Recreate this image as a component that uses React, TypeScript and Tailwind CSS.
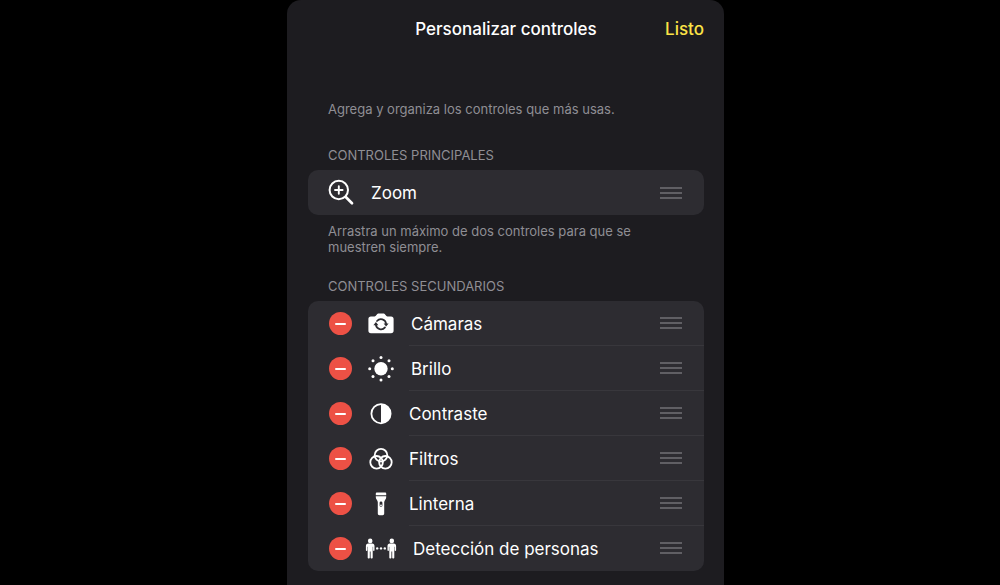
import { useState } from 'react';
import type { ReactNode } from 'react';

type IconSize = 'sm' | 'md' | 'lg';

interface Control {
  id: string;
  label: string;
  size: IconSize;
  icon: ReactNode;
}

// Wider glyphs push their label a little further to the right
const LABEL_PAD: Record<IconSize, string> = {
  sm: 'pl-0',
  md: 'pl-0.5',
  lg: 'pl-1',
};

function ZoomIcon() {
  return (
    <svg width="28" height="28" viewBox="0 0 28 28" fill="none" stroke="white" strokeLinecap="round" aria-hidden="true">
      <circle cx="10.8" cy="11" r="9.2" strokeWidth="2" />
      <path d="M17.8 18 L24 24.2" strokeWidth="2.7" />
      <path d="M10.8 7.2 V14.8 M7 11 H14.6" strokeWidth="1.9" />
    </svg>
  );
}

function CameraIcon() {
  return (
    <svg width="26" height="22" viewBox="0 0 26 22" aria-hidden="true">
      <path
        d="M3 3.4 H6.6 C7.4 3.4 7.7 3 8.2 2.3 L8.9 1.4 C9.4 .7 9.9 .5 10.8 .5 H15.2 C16.1 .5 16.6 .7 17.1 1.4 L17.8 2.3 C18.3 3 18.6 3.4 19.4 3.4 H23 C24.8 3.4 25.6 4.3 25.6 6 V17.6 C25.6 19.4 24.8 20.2 23 20.2 H3 C1.2 20.2 .4 19.4 .4 17.6 V6 C.4 4.3 1.2 3.4 3 3.4 Z"
        fill="white"
      />
      <g fill="none" stroke="#2d2c31" strokeWidth="1.7" strokeLinecap="round">
        <path d="M9 8 A5.2 5.2 0 0 1 18.1 10.6" />
        <path d="M17 14.4 A5.2 5.2 0 0 1 7.9 12" />
      </g>
      <path d="M15.6 10.4 H20.6 L18.1 13.5 Z M5.4 12.2 H10.4 L7.9 9.1 Z" fill="#2d2c31" />
    </svg>
  );
}

function BrightnessIcon() {
  return (
    <svg width="26" height="26" viewBox="0 0 26 26" fill="white" aria-hidden="true">
      <circle cx="13" cy="12.7" r="6.7" />
      <circle cx="13" cy="1.6" r="1.5" />
      <circle cx="21" cy="4.8" r="1.5" />
      <circle cx="24.3" cy="12.7" r="1.5" />
      <circle cx="21" cy="20.6" r="1.5" />
      <circle cx="13" cy="23.9" r="1.5" />
      <circle cx="5" cy="20.6" r="1.5" />
      <circle cx="1.7" cy="12.7" r="1.5" />
      <circle cx="5" cy="4.8" r="1.5" />
    </svg>
  );
}

function ContrastIcon() {
  return (
    <svg width="22" height="22" viewBox="0 0 22 22" aria-hidden="true">
      <circle cx="11" cy="10.7" r="9.6" fill="none" stroke="white" strokeWidth="1.8" />
      <path d="M11 1.1 A9.6 9.6 0 0 1 11 20.3 Z" fill="white" />
    </svg>
  );
}

function FiltersIcon() {
  return (
    <svg width="24" height="24" viewBox="0 0 24 24" fill="none" stroke="white" strokeWidth="1.8" aria-hidden="true">
      <circle cx="12" cy="8.2" r="6.3" />
      <circle cx="7.6" cy="15.3" r="6.3" />
      <circle cx="16.4" cy="15.3" r="6.3" />
    </svg>
  );
}

function FlashlightIcon() {
  return (
    <svg width="12" height="24" viewBox="0 0 12 24" fill="white" aria-hidden="true">
      <path d="M.8 1.8 C.8 1 1.3 .6 2 .6 H10 C10.7 .6 11.2 1 11.2 1.8 V3.2 H.8 Z" />
      <path
        fillRule="evenodd"
        d="M.8 4.3 H11.2 V5.2 C11.2 7.6 9.2 8 9.2 10.2 V21.6 C9.2 22.8 8.6 23.3 7.6 23.3 H4.4 C3.4 23.3 2.8 22.8 2.8 21.6 V10.2 C2.8 8 .8 7.6 .8 5.2 Z M6 9.4 A1.4 1.4 0 0 0 4.6 10.8 V13.4 A1.4 1.4 0 0 0 7.4 13.4 V10.8 A1.4 1.4 0 0 0 6 9.4 Z"
      />
      <circle cx="6" cy="13.3" r=".9" />
    </svg>
  );
}

const PERSON =
  'M2.8 5.5 H6.6 C8.2 5.5 9 6.4 9 8 V12.2 C9 13.3 7.6 13.3 7.6 12.2 V8.7 H7.2 V19.4 C7.2 20.8 5.1 20.8 5.1 19.4 V13.4 H4.3 V19.4 C4.3 20.8 2.2 20.8 2.2 19.4 V8.7 H1.8 V12.2 C1.8 13.3 .4 13.3 .4 12.2 V8 C.4 6.4 1.2 5.5 2.8 5.5 Z';

function PeopleIcon() {
  return (
    <svg width="32" height="22" viewBox="0 0 32 22" fill="white" aria-hidden="true">
      <circle cx="5.2" cy="2.9" r="2.3" />
      <path d={PERSON} transform="translate(.5 0)" />
      <circle cx="26.8" cy="2.9" r="2.3" />
      <path d={PERSON} transform="translate(22.1 0)" />
      <circle cx="12.2" cy="10.4" r="1.2" />
      <circle cx="16" cy="10.4" r="1.2" />
      <circle cx="19.8" cy="10.4" r="1.2" />
    </svg>
  );
}

const SECONDARY: Control[] = [
  { id: 'cameras', label: 'Cámaras', size: 'md', icon: <CameraIcon /> },
  { id: 'brightness', label: 'Brillo', size: 'md', icon: <BrightnessIcon /> },
  { id: 'contrast', label: 'Contraste', size: 'sm', icon: <ContrastIcon /> },
  { id: 'filters', label: 'Filtros', size: 'sm', icon: <FiltersIcon /> },
  { id: 'flashlight', label: 'Linterna', size: 'sm', icon: <FlashlightIcon /> },
  { id: 'people', label: 'Detección de personas', size: 'lg', icon: <PeopleIcon /> },
];

function DragHandle({ label }: { label: string }) {
  return (
    <button type="button" aria-label={`Mover ${label}`} className="flex w-6 shrink-0 cursor-grab flex-col gap-[3px] px-px">
      <span className="h-0.5 w-full bg-[#605f64]" />
      <span className="h-0.5 w-full bg-[#605f64]" />
      <span className="h-0.5 w-full bg-[#605f64]" />
    </button>
  );
}

export default function App() {
  const [controls, setControls] = useState(SECONDARY);

  const remove = (id: string) => {
    setControls(prev => prev.filter(c => c.id !== id));
  };

  return (
    <div className="flex min-h-screen justify-center bg-black pl-[11px] font-['Inter',sans-serif]">
      <main className="min-h-screen w-full max-w-[437px] rounded-t-[14px] bg-[#1d1c20] pr-5 pb-3.5 pl-[21px]">
        {/* Title bar */}
        <header className="grid h-[58px] grid-cols-[1fr_auto_1fr] items-center pt-0.5 text-[17px]">
          <h1 className="col-start-2 font-medium text-white">Personalizar controles</h1>
          <button type="button" className="justify-self-end font-medium text-[#fbe246]">
            Listo
          </button>
        </header>

        <p className="mt-[43px] px-5 text-[13px] leading-4 text-[#8f8e94]">
          Agrega y organiza los controles que más usas.
        </p>

        {/* Main controls */}
        <section className="mt-[30px]">
          <h2 className="px-5 text-[13px] leading-4 text-[#8f8e94]">CONTROLES PRINCIPALES</h2>
          <div className="mt-[7px] flex h-[45px] items-center rounded-[10px] bg-[#2d2c31] pr-[21px] pl-5">
            <ZoomIcon />
            <span className="flex-1 pt-0.5 pl-[15px] text-[17px] text-white">Zoom</span>
            <DragHandle label="Zoom" />
          </div>
          <p className="mt-2 pr-12 pl-5 text-[13px] leading-4 text-[#8f8e94]">
            Arrastra un máximo de dos controles para que se muestren siempre.
          </p>
        </section>

        {/* Secondary controls */}
        <section className="mt-[23px]">
          <h2 className="px-5 text-[13px] leading-4 text-[#8f8e94]">CONTROLES SECUNDARIOS</h2>
          <ul className="mt-[7px] rounded-[10px] bg-[#2d2c31]">
            {controls.map((c, i) => (
              <li key={c.id} className="flex h-[45px] items-center pl-[21px]">
                <button
                  type="button"
                  aria-label={`Eliminar ${c.label}`}
                  onClick={() => remove(c.id)}
                  className="flex size-[23px] shrink-0 items-center justify-center rounded-full bg-[#ed5145]"
                >
                  <span className="h-0.5 w-[11px] rounded-full bg-white" />
                </button>
                <span className="ml-[13px] flex w-8 shrink-0 justify-center">{c.icon}</span>
                <div
                  className={`ml-3 flex h-full flex-1 items-center border-b pr-[21px] ${
                    i < controls.length - 1 ? 'border-[#38373c]' : 'border-transparent'
                  }`}
                >
                  <span className={`flex-1 pt-[3px] text-[17px] text-white ${LABEL_PAD[c.size]}`}>{c.label}</span>
                  <DragHandle label={c.label} />
                </div>
              </li>
            ))}
          </ul>
        </section>
      </main>
    </div>
  );
}
